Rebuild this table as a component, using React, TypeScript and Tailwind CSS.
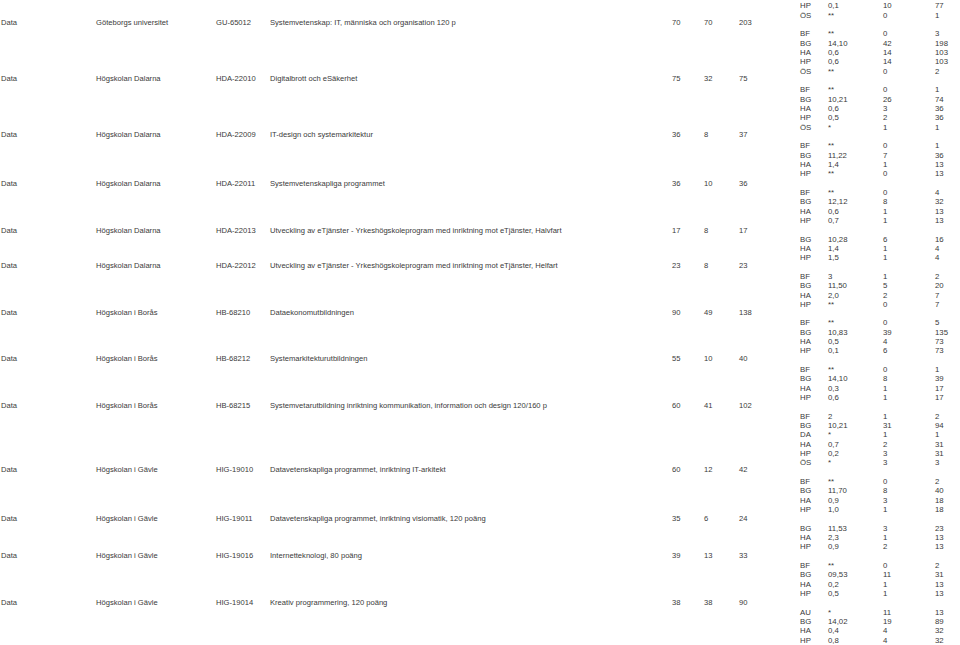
import React from 'react';

type Row = [string, string, string, string, string, string, string];

// left-hand listing: [area, school, code, programme, a, b, c]
const rows: Row[] = [
  ['Data', 'Göteborgs universitet', 'GU-65012', 'Systemvetenskap: IT, människa och organisation 120 p', '70', '70', '203'],
  ['Data', 'Högskolan Dalarna', 'HDA-22010', 'Digitalbrott och eSäkerhet', '75', '32', '75'],
  ['Data', 'Högskolan Dalarna', 'HDA-22009', 'IT-design och systemarkitektur', '36', '8', '37'],
  ['Data', 'Högskolan Dalarna', 'HDA-22011', 'Systemvetenskapliga programmet', '36', '10', '36'],
  ['Data', 'Högskolan Dalarna', 'HDA-22013', 'Utveckling av eTjänster - Yrkeshögskoleprogram med inriktning mot eTjänster, Halvfart', '17', '8', '17'],
  ['Data', 'Högskolan Dalarna', 'HDA-22012', 'Utveckling av eTjänster - Yrkeshögskoleprogram med inriktning mot eTjänster, Helfart', '23', '8', '23'],
  ['Data', 'Högskolan i Borås', 'HB-68210', 'Dataekonomutbildningen', '90', '49', '138'],
  ['Data', 'Högskolan i Borås', 'HB-68212', 'Systemarkitekturutbildningen', '55', '10', '40'],
  ['Data', 'Högskolan i Borås', 'HB-68215', 'Systemvetarutbildning inriktning kommunikation, information och design 120/160 p', '60', '41', '102'],
  ['Data', 'Högskolan i Gävle', 'HIG-19010', 'Datavetenskapliga programmet, inriktning IT-arkitekt', '60', '12', '42'],
  ['Data', 'Högskolan i Gävle', 'HIG-19011', 'Datavetenskapliga programmet, inriktning visiomatik, 120 poäng', '35', '6', '24'],
  ['Data', 'Högskolan i Gävle', 'HIG-19016', 'Internetteknologi, 80 poäng', '39', '13', '33'],
  ['Data', 'Högskolan i Gävle', 'HIG-19014', 'Kreativ programmering, 120 poäng', '38', '38', '90'],
];

// spacing above each row (the source is a PDF, rows are not evenly spaced)
const rowGaps = ['mt-[18px]', 'mt-[46px]', 'mt-[46px]', 'mt-[39px]', 'mt-[37px]', 'mt-[25px]', 'mt-[37px]', 'mt-[36px]', 'mt-[37px]', 'mt-[54px]', 'mt-[39px]', 'mt-[27px]', 'mt-[37px]'];

// right-hand breakdown, grouped
const groups: string[][][] = [
  [['HP', '0,1', '10', '77'], ['ÖS', '**', '0', '1']],
  [['BF', '**', '0', '3'], ['BG', '14,10', '42', '198'], ['HA', '0,6', '14', '103'], ['HP', '0,6', '14', '103'], ['ÖS', '**', '0', '2']],
  [['BF', '**', '0', '1'], ['BG', '10,21', '26', '74'], ['HA', '0,6', '3', '36'], ['HP', '0,5', '2', '36'], ['ÖS', '*', '1', '1']],
  [['BF', '**', '0', '1'], ['BG', '11,22', '7', '36'], ['HA', '1,4', '1', '13'], ['HP', '**', '0', '13']],
  [['BF', '**', '0', '4'], ['BG', '12,12', '8', '32'], ['HA', '0,6', '1', '13'], ['HP', '0,7', '1', '13']],
  [['BG', '10,28', '6', '16'], ['HA', '1,4', '1', '4'], ['HP', '1,5', '1', '4']],
  [['BF', '3', '1', '2'], ['BG', '11,50', '5', '20'], ['HA', '2,0', '2', '7'], ['HP', '**', '0', '7']],
  [['BF', '**', '0', '5'], ['BG', '10,83', '39', '135'], ['HA', '0,5', '4', '73'], ['HP', '0,1', '6', '73']],
  [['BF', '**', '0', '1'], ['BG', '14,10', '8', '39'], ['HA', '0,3', '1', '17'], ['HP', '0,6', '1', '17']],
  [['BF', '2', '1', '2'], ['BG', '10,21', '31', '94'], ['DA', '*', '1', '1'], ['HA', '0,7', '2', '31'], ['HP', '0,2', '3', '31'], ['ÖS', '*', '3', '3']],
  [['BF', '**', '0', '2'], ['BG', '11,70', '8', '40'], ['HA', '0,9', '3', '18'], ['HP', '1,0', '1', '18']],
  [['BG', '11,53', '3', '23'], ['HA', '2,3', '1', '13'], ['HP', '0,9', '2', '13']],
  [['BF', '**', '0', '2'], ['BG', '09,53', '11', '31'], ['HA', '0,2', '1', '13'], ['HP', '0,5', '1', '13']],
  [['AU', '*', '11', '13'], ['BG', '14,02', '19', '89'], ['HA', '0,4', '4', '32'], ['HP', '0,8', '4', '32']],
];

function Listing() {
  return (
    <div className="flex w-[780px] flex-col text-[7.6px]">
      {rows.map((r, i) => (
        <div
          key={r[2]}
          className={`${rowGaps[i]} grid h-[10px] grid-cols-[96px_120px_54px_402px_32px_35px_1fr] whitespace-nowrap leading-[10px]`}
        >
          <span className="pl-px">{r[0]}</span>
          <span>{r[1]}</span>
          <span>{r[2]}</span>
          <span>{r[3]}</span>
          <span>{r[4]}</span>
          <span>{r[5]}</span>
          <span>{r[6]}</span>
        </div>
      ))}
    </div>
  );
}

function Breakdown() {
  return (
    <div className="flex w-[180px] flex-col pl-[20px] pt-[1.33px] text-[7.8px]">
      {groups.map((g, gi) => (
        <div key={gi} className={gi === 0 ? '' : 'mt-[9.33px]'}>
          {g.map((line, li) => (
            <div key={li} className="grid h-[9.33px] grid-cols-[28px_55px_52px_1fr] leading-[9.33px] whitespace-nowrap">
              {line.map((cell, ci) => (
                <span key={ci}>{cell}</span>
              ))}
            </div>
          ))}
        </div>
      ))}
    </div>
  );
}

export default function App() {
  return (
    <div className="flex h-[645px] w-[960px] overflow-hidden bg-white font-['Liberation_Sans',Arial,sans-serif] text-[#3a3a3a]">
      <Listing />
      <Breakdown />
    </div>
  );
}
